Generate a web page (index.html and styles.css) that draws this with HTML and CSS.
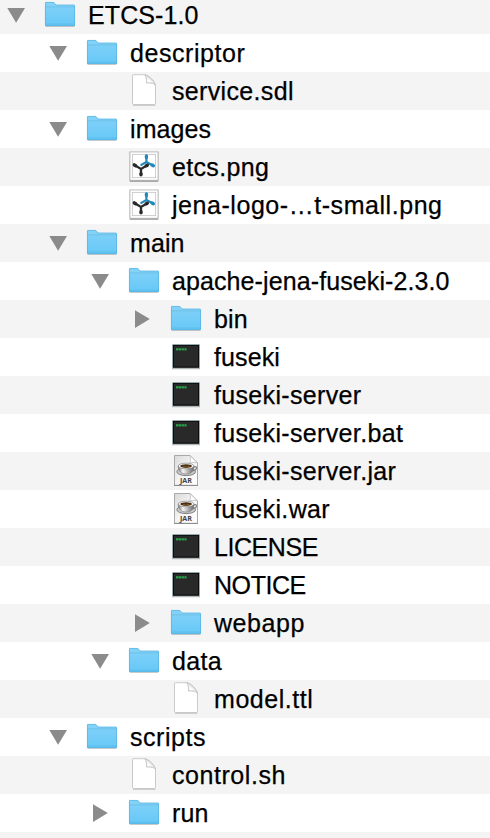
FILE: index.html
```html
<!DOCTYPE html>
<html lang="en">
<head>
<meta charset="utf-8">
<title>ETCS-1.0</title>
<link rel="stylesheet" href="styles.css">
</head>
<body>
<svg class="defs" aria-hidden="true">
  <defs>
    <linearGradient id="folder-face" x1="0" y1="0" x2="0" y2="1"><stop offset="0" stop-color="#7dd0f8"/><stop offset="1" stop-color="#66c8f6"/></linearGradient>
    <linearGradient id="paper" x1="0" y1="0" x2="1" y2="1"><stop offset="0" stop-color="#d9d9d9"/><stop offset=".5" stop-color="#f4f4f4"/><stop offset="1" stop-color="#fff"/></linearGradient>
    <linearGradient id="cup-body" x1="0" y1="0" x2="1" y2="0"><stop offset="0" stop-color="#777"/><stop offset=".3" stop-color="#f5f5f5"/><stop offset="1" stop-color="#666"/></linearGradient>
    <symbol id="down" viewBox="0 0 44 38"><path d="M7.3 12H25L16.1 26.8Z" fill="#8b8b8b"/></symbol>
    <symbol id="right" viewBox="0 0 44 38"><path d="M9 10.2V28L23.8 19.1Z" fill="#8b8b8b"/></symbol>
    <symbol id="folder" viewBox="0 0 32 34">
      <path d="M1.5 28.4H30.5" stroke="#000" stroke-opacity=".22"/>
      <path d="M1 27V5.2Q1 4 2.2 4H9.2Q10 4 10.7 4.9L11.5 6Q12 6.7 13 6.7H29.8Q31 6.7 31 7.9V27Q31 28 30 28H2Q1 28 1 27Z" fill="#84d2f7"/>
      <path d="M1 9.3H31V27Q31 28 30 28H2Q1 28 1 27Z" fill="url(#folder-face)"/>
      <path d="M1.3 8.9H30.7" stroke="#5bb3dc" stroke-width=".6"/>
      <path d="M1.4 26.1H30.6" stroke="#56b4e2" stroke-width=".6"/>
      <path d="M1.4 27V5.2Q1.4 4.4 2.2 4.4H9.2Q9.9 4.4 10.4 5.2L11.2 6.3Q11.8 7.1 13 7.1H29.8Q30.6 7.1 30.6 7.9V27Q30.6 27.6 30 27.6H2Q1.4 27.6 1.4 27Z" fill="none" stroke="#4faddb" stroke-width=".6"/>
    </symbol>
    <symbol id="doc" viewBox="0 0 32 34">
      <path d="M5 31H27.4" stroke="#aaa" stroke-width="1"/>
      <path d="M5.2 .7H16.5C20.5 .7 27.5 7.7 27.5 12V29.3Q27.5 30.5 26.3 30.5H5.7Q4.5 30.5 4.5 29.3V1.4Q4.5 .7 5.2 .7Z" fill="#fff" stroke="#c4c4c4" stroke-width=".9"/>
      <path d="M16.8 .9C18.3 2.2 18.5 5 18.5 9C23 9 26.4 9.2 27.3 11.2C26.5 7.3 20.5 1.5 16.8 .9Z" fill="#ededed" stroke="#bdbdbd" stroke-width=".8"/>
      <path d="M19.4 4.3V8H23.6Z" fill="#fff"/>
    </symbol>
    <symbol id="image" viewBox="0 0 32 34">
      <rect x="1.2" y="1.6" width="29.6" height="29.9" fill="#000" opacity=".18"/>
      <path d="M2 30.9H30" stroke="#777" stroke-width="1.2"/>
      <rect x="2" y="2" width="28" height="28.2" fill="#fff" stroke="#b9b9b9" stroke-width=".8"/>
      <rect x="4.4" y="4.4" width="23.2" height="23.2" fill="#fff" stroke="#c9c9c9" stroke-width=".9"/>
      <g fill="none" stroke="#2389bd" stroke-width="2.2" stroke-linecap="round"><path d="M18.4 5.9V12L13.3 14.9M18.4 12L25.4 15.8"/><path d="M18.4 5.9V7.6M24 15L25.4 15.8" stroke-width="3.3"/></g>
      <g fill="none" stroke="#292929" stroke-width="2.3" stroke-linecap="round"><path d="M6.3 14.9L13 18.9L19.3 15.2M13 18.9V24.8"/><path d="M6.3 14.9L7.7 15.7M13 23.6V24.8M18.3 15.8L19.3 15.2" stroke-width="3.4"/></g>
    </symbol>
    <symbol id="exec" viewBox="0 0 32 34">
      <path d="M2 28.6H30" stroke="#777" stroke-width="1.2" opacity=".6"/>
      <rect x="2" y="4" width="28" height="24.3" fill="#bad0d6"/>
      <rect x="2.8" y="4.8" width="26.4" height="23" fill="#0b0b0b"/>
      <rect x="4" y="5.8" width="24" height="20.8" fill="#292929"/>
      <path d="M6 9.4H17" stroke="#209642" stroke-width="2.3" stroke-dasharray="2.1 .7"/>
      <path d="M6.4 9.1H16.8" stroke="#48ca65" stroke-width=".8" stroke-dasharray="1 .7"/>
    </symbol>
    <symbol id="jar" viewBox="0 0 32 34">
      <path d="M4.5 1.5H20L27.5 9V31.3H4.5Z" fill="url(#paper)" stroke="#a2a2a2" stroke-width=".9"/>
      <path d="M4 31.5H28" stroke="#888" stroke-width=".9"/>
      <path d="M20 1.5C20.8 4 20.5 7 19.8 9.1C23 8 25.7 8.2 27.5 9Z" fill="#fff" stroke="#b4b4b4" stroke-width=".7"/>
      <ellipse cx="16.2" cy="17.7" rx="9.4" ry="3.9" fill="#c9c9c9" stroke="#777" stroke-width=".9"/>
      <path d="M23.3 13.2Q27.2 11.8 26.3 14.6Q25.6 16.8 22.3 16.8" fill="none" stroke="#888" stroke-width="1.3"/>
      <path d="M8.2 12C8.2 17 11.2 20 16.1 20S24 17 24 12Z" fill="url(#cup-body)" stroke="#777" stroke-width=".6"/>
      <ellipse cx="16.1" cy="12" rx="7.9" ry="2.8" fill="#f7f7f7" stroke="#777" stroke-width=".6"/>
      <ellipse cx="16.1" cy="12.1" rx="5.8" ry="1.8" fill="#4b3016"/>
      <path d="M13 12.6Q16 13.6 19.5 12.4" fill="none" stroke="#a06d2d" stroke-width=".7"/>
      <text class="jar-text" x="10" y="29" textLength="12" lengthAdjust="spacingAndGlyphs">JAR</text>
    </symbol>
  </defs>
</svg>
<main class="tree">
  <div class="row d0"><svg class="arrow"><use href="#down"/></svg><svg class="icon"><use href="#folder"/></svg><span class="name">ETCS-1.0</span></div>
  <div class="row d1"><svg class="arrow"><use href="#down"/></svg><svg class="icon"><use href="#folder"/></svg><span class="name wider">descriptor</span></div>
  <div class="row d2"><svg class="arrow"></svg><svg class="icon"><use href="#doc"/></svg><span class="name wide">service.sdl</span></div>
  <div class="row d1"><svg class="arrow"><use href="#down"/></svg><svg class="icon"><use href="#folder"/></svg><span class="name">images</span></div>
  <div class="row d2"><svg class="arrow"></svg><svg class="icon"><use href="#image"/></svg><span class="name wide">etcs.png</span></div>
  <div class="row d2"><svg class="arrow"></svg><svg class="icon"><use href="#image"/></svg><span class="name wider">jena-logo-…t-small.png</span></div>
  <div class="row d1"><svg class="arrow"><use href="#down"/></svg><svg class="icon"><use href="#folder"/></svg><span class="name">main</span></div>
  <div class="row d2"><svg class="arrow"><use href="#down"/></svg><svg class="icon"><use href="#folder"/></svg><span class="name">apache-jena-fuseki-2.3.0</span></div>
  <div class="row d3"><svg class="arrow"><use href="#right"/></svg><svg class="icon"><use href="#folder"/></svg><span class="name">bin</span></div>
  <div class="row d3"><svg class="arrow"></svg><svg class="icon"><use href="#exec"/></svg><span class="name">fuseki</span></div>
  <div class="row d3"><svg class="arrow"></svg><svg class="icon"><use href="#exec"/></svg><span class="name wide">fuseki-server</span></div>
  <div class="row d3"><svg class="arrow"></svg><svg class="icon"><use href="#exec"/></svg><span class="name wide">fuseki-server.bat</span></div>
  <div class="row d3"><svg class="arrow"></svg><svg class="icon"><use href="#jar"/></svg><span class="name wide">fuseki-server.jar</span></div>
  <div class="row d3"><svg class="arrow"></svg><svg class="icon"><use href="#jar"/></svg><span class="name wide">fuseki.war</span></div>
  <div class="row d3"><svg class="arrow"></svg><svg class="icon"><use href="#exec"/></svg><span class="name tight">LICENSE</span></div>
  <div class="row d3"><svg class="arrow"></svg><svg class="icon"><use href="#exec"/></svg><span class="name tight">NOTICE</span></div>
  <div class="row d3"><svg class="arrow"><use href="#right"/></svg><svg class="icon"><use href="#folder"/></svg><span class="name wider">webapp</span></div>
  <div class="row d2"><svg class="arrow"><use href="#down"/></svg><svg class="icon"><use href="#folder"/></svg><span class="name wide">data</span></div>
  <div class="row d3"><svg class="arrow"></svg><svg class="icon"><use href="#doc"/></svg><span class="name wider">model.ttl</span></div>
  <div class="row d1"><svg class="arrow"><use href="#down"/></svg><svg class="icon"><use href="#folder"/></svg><span class="name wider">scripts</span></div>
  <div class="row d2"><svg class="arrow"></svg><svg class="icon"><use href="#doc"/></svg><span class="name wider">control.sh</span></div>
  <div class="row d2"><svg class="arrow"><use href="#right"/></svg><svg class="icon"><use href="#folder"/></svg><span class="name">run</span></div>
  <div class="row"></div>
</main>
</body>
</html>
```
FILE: styles.css
```css
* { box-sizing: border-box; }
body { margin: 0; height: 838px; overflow: hidden; background: #fff; }
.defs { display: block; width: 0; height: 0; }
.tree {
  margin-top: -4px;
  color: #000;
  font-family: "Liberation Sans", Arial, sans-serif;
  font-size: 25px;
  letter-spacing: 0.1px;
}
.row { display: flex; height: 38px; }
.row:nth-child(odd) { background: #f4f4f4; }
.d1 { padding-left: 42px; }
.d2 { padding-left: 84px; }
.d3 { padding-left: 126px; }
.arrow { flex: none; width: 44px; height: 38px; }
.icon { flex: none; width: 32px; height: 34px; margin-top: 2px; }
.name { margin-left: 12px; line-height: 38px; white-space: nowrap; -webkit-text-stroke: 0.25px #000; }
.wide { letter-spacing: 0.34px; }
.wider { letter-spacing: 0.55px; }
.tight { letter-spacing: -0.43px; }
.jar-text { font: bold 6.5px "Open Sans", sans-serif; letter-spacing: 0; fill: #444; }
```
